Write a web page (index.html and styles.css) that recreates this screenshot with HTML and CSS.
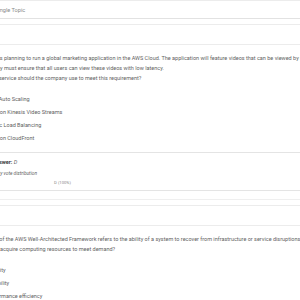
FILE: index.html
```html
<!DOCTYPE html>
<html lang="en">
<head>
    <meta charset="UTF-8" />
    <title>Single Topic</title>
    <link rel="stylesheet" href="styles.css">
</head>
<body>
    <div class="page">
        <div class="topic-bar">Single Topic</div>

        <div class="card">
            <div class="card-header"></div>
            <div class="card-body">
                <p class="question">
                    A company is planning to run a global marketing application in the AWS Cloud. The application will feature videos that can be viewed by users.<br>
                    The company must ensure that all users can view these videos with low latency.<br>
                    Which AWS service should the company use to meet this requirement?
                </p>
                <ul class="choices">
                    <li>A. AWS Auto Scaling</li>
                    <li>B. Amazon Kinesis Video Streams</li>
                    <li>C. Elastic Load Balancing</li>
                    <li>D. Amazon CloudFront</li>
                </ul>
                <div class="answer">
                    <p class="answer-line"><b>Correct Answer:</b> <i>D</i></p>
                    <div class="votes">
                        <p class="votes-title">Community vote distribution</p>
                        <div class="vote-bar">D (100%)</div>
                    </div>
                </div>
            </div>
        </div>

        <div class="card">
            <div class="card-header"></div>
            <div class="card-body">
                <p class="question">
                    Which pillar of the AWS Well-Architected Framework refers to the ability of a system to recover from infrastructure or service disruptions and<br>
                    dynamically acquire computing resources to meet demand?
                </p>
                <ul class="choices">
                    <li>A. Security</li>
                    <li>B. Reliability</li>
                    <li>C. Performance efficiency</li>
                    <li>D. Cost optimization</li>
                </ul>
            </div>
        </div>
    </div>
</body>
</html>
```

FILE: styles.css
```css
* {
    box-sizing: border-box;
    margin: 0;
    padding: 0;
}

body {
    font-family: Roboto, "Liberation Sans", sans-serif;
    background: #ffffff;
    color: #5f5f5f;
    overflow: hidden;
}

.page {
    margin-left: -30.5px;
    width: 460px;
}

.topic-bar {
    height: 19px;
    border-top: 1px solid #ececec;
    border-bottom: 1px solid #e2e2e2;
    padding-left: 25.5px;
    padding-top: 1px;
    font-size: 5.6px;
    line-height: 17px;
    color: #8a8a8a;
}

.card {
    margin-top: 5px;
    padding-bottom: 8px;
    border-bottom: 1px solid #efefef;
}

.card-header {
    height: 21px;
    border-top: 1px solid #ececec;
    border-bottom: 1px solid #ececec;
}

.card-body {
    padding-top: 8px;
}

.question {
    font-size: 5.5px;
    line-height: 10px;
    white-space: nowrap;
}

.choices {
    list-style: none;
    margin-top: 10px;
    padding-left: 10px;
    font-size: 5.5px;
    line-height: 13px;
    white-space: nowrap;
}

.answer {
    margin-top: 7px;
    border-top: 1px solid #e4e4e4;
    border-bottom: 1px solid #e4e4e4;
    padding: 4px 0 3px;
}

.answer-line {
    padding-left: 3px;
    font-size: 5.5px;
    line-height: 10px;
}

.answer-line b {
    color: #3a3a3a;
}

.votes {
    margin-top: 2px;
    padding-left: 9px;
}

.votes-title {
    font-size: 4.8px;
    font-style: italic;
    line-height: 10px;
}

.vote-bar {
    width: 168px;
    text-align: center;
    font-size: 4.2px;
    line-height: 8px;
    color: #8a8a8a;
}
```
